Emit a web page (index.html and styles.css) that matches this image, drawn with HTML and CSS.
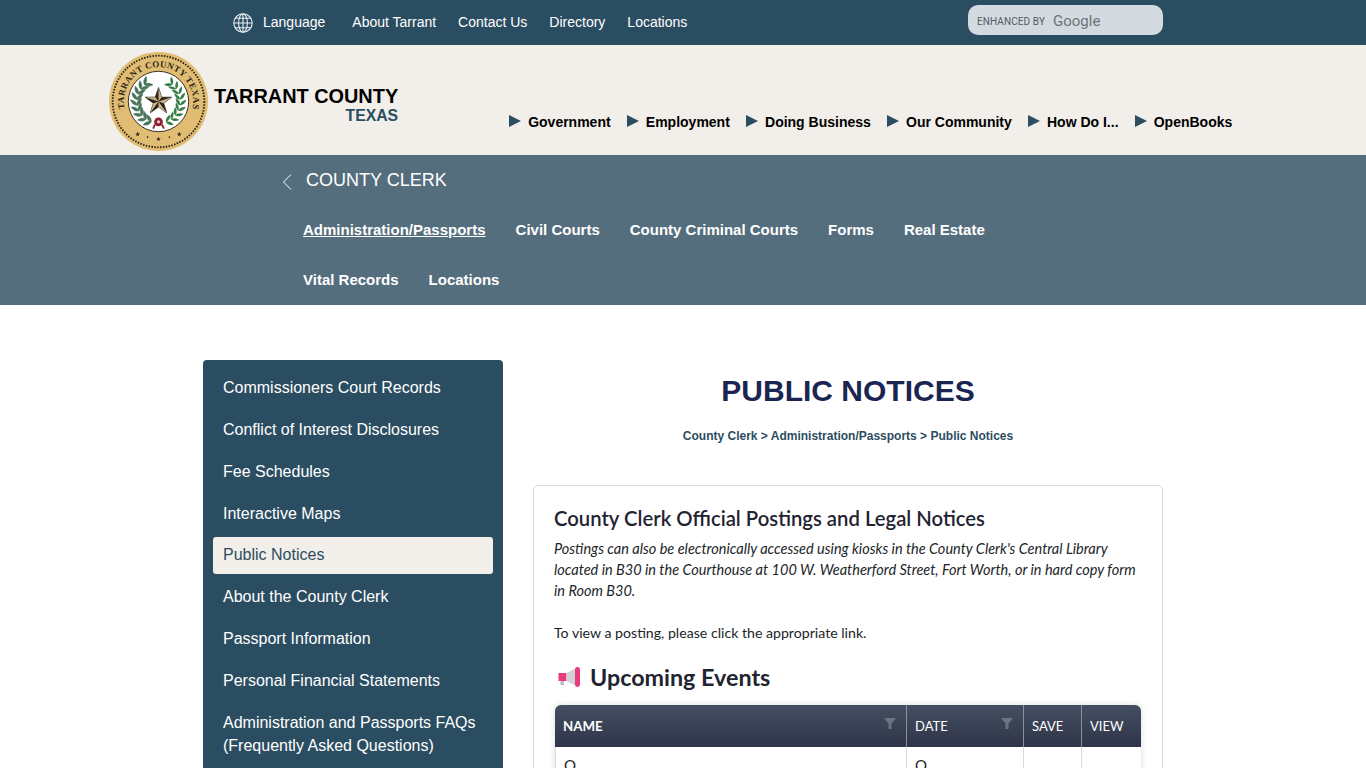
FILE: index.html
```html
<!DOCTYPE html>
<html lang="en">
<head>
<meta charset="utf-8">
<title>Public Notices - Tarrant County</title>
<link rel="stylesheet" href="styles.css">
</head>
<body>
<div class="topbar">
  <nav class="toplinks">
    <a class="lang" href="#">
      <svg class="globe" viewBox="0 0 20 20" width="20" height="20" fill="none" stroke="#e6edf1" stroke-width="1.1">
        <circle cx="10" cy="10" r="9.2"/>
        <ellipse cx="10" cy="10" rx="4.4" ry="9.2"/>
        <path d="M10 .8v18.4M.8 10h18.4M2.2 5.2h15.6M2.2 14.8h15.6"/>
      </svg>
      <span>Language</span>
    </a>
    <a href="#">About Tarrant</a>
    <a href="#">Contact Us</a>
    <a href="#">Directory</a>
    <a href="#">Locations</a>
  </nav>
  <div class="search"><span class="enh">ENHANCED BY</span><span class="goog">Google</span></div>
</div>

<header class="masthead">
  <svg class="seal" viewBox="0 0 100 100" width="99" height="99">
    <defs>
      <path id="arc" d="M16 58.500A35 35 0 1 1 84 58.500"/>
      <path id="leaf" d="M0 0C2-1.900 5.500-1.900 8.500 0C5.500 1.900 2 1.900 0 0Z"/>
      <polygon id="st" points="0,-2.400 .7,-.7 2.400,-.7 1,.3 1.500,2 0,1 -1.500,2 -1,.3 -2.400,-.7 -.7,-.7"/>
      <g id="frond">
        <use href="#leaf" transform="translate(57.500 70.700) rotate(20)"/>
        <use href="#leaf" transform="translate(57.500 70.700) rotate(-60)"/>
        <use href="#leaf" transform="translate(62.600 68) rotate(5)"/>
        <use href="#leaf" transform="translate(62.600 68) rotate(-75)"/>
        <use href="#leaf" transform="translate(66.900 64.100) rotate(-10)"/>
        <use href="#leaf" transform="translate(66.900 64.100) rotate(-90)"/>
        <use href="#leaf" transform="translate(69.900 59.300) rotate(-25)"/>
        <use href="#leaf" transform="translate(69.900 59.300) rotate(-105)"/>
        <use href="#leaf" transform="translate(71.700 53.800) rotate(-40)"/>
        <use href="#leaf" transform="translate(71.700 53.800) rotate(-120)"/>
        <use href="#leaf" transform="translate(71.900 48.100) rotate(-55)"/>
        <use href="#leaf" transform="translate(71.900 48.100) rotate(-135)"/>
        <use href="#leaf" transform="translate(70.700 42.500) rotate(-70)"/>
        <use href="#leaf" transform="translate(70.700 42.500) rotate(-150)"/>
        <use href="#leaf" transform="translate(68 37.400) rotate(-85)"/>
        <use href="#leaf" transform="translate(68 37.400) rotate(-165)"/>
        <use href="#leaf" transform="translate(64.100 33.100) rotate(-100)"/>
        <use href="#leaf" transform="translate(64.100 33.100) rotate(-180)"/>
      </g>
    </defs>
    <circle cx="50" cy="50" r="50" fill="#e0bd72"/>
    <circle cx="50" cy="50" r="46.300" fill="none" stroke="#2a2116" stroke-width="1.900" stroke-dasharray="1.500 1.400"/>
    <text class="sealtext" textLength="124"><textPath href="#arc" startOffset="50%" text-anchor="middle">TARRANT COUNTY TEXAS</textPath></text>
    <circle cx="50" cy="50" r="30.500" fill="#fff" stroke="#3a3022" stroke-width="1"/>
    <use href="#frond" fill="#357f47"/>
    <use href="#frond" transform="translate(100 0) scale(-1 1)" fill="#47735a" stroke="#47735a" stroke-width=".6"/>
    <polygon points="50,36 53.200,45.600 63.300,45.700 55.200,51.700 58.200,61.300 50,55.500 41.800,61.300 44.800,51.700 36.700,45.700 46.800,45.600" fill="#2a2318" stroke="#2a2318" stroke-width=".8"/>
    <path d="M50 50L50 36 53.200 45.600ZM50 50L63.300 45.700 55.200 51.700ZM50 50L58.200 61.300 50 55.500ZM50 50L41.800 61.300 44.800 51.700ZM50 50L36.700 45.700 46.800 45.600Z" fill="#c9b389"/>
    <path d="M46.500 73l-2 4.500M53.500 73l2 4.500" stroke="#8e1f2b" stroke-width="1.800" fill="none"/>
    <circle cx="50" cy="70.500" r="4.400" fill="#8e1f2b"/>
    <circle cx="50" cy="70.500" r="1.600" fill="#e8cfc7"/>
    <g fill="#2a2116">
      <use href="#st" transform="translate(50 88)"/>
      <use href="#st" transform="translate(29 83)"/>
      <use href="#st" transform="translate(71 83)"/>
      <circle cx="39" cy="86" r=".8"/>
      <circle cx="61" cy="86" r=".8"/>
    </g>
  </svg>
  <div class="brand">
    <div class="brand-name">TARRANT COUNTY</div>
    <div class="brand-state">TEXAS</div>
  </div>
  <nav class="mainnav">
    <a href="#">Government</a>
    <a href="#">Employment</a>
    <a href="#">Doing Business</a>
    <a href="#">Our Community</a>
    <a href="#">How Do I...</a>
    <a href="#">OpenBooks</a>
  </nav>
</header>

<section class="subnav">
  <div class="subnav-title">
    <svg class="chev" viewBox="0 0 10 16" width="10" height="16" fill="none" stroke="#fff" stroke-width="1"><path d="M9 .5L1.500 8 9 15.500"/></svg>
    <span>COUNTY CLERK</span>
  </div>
  <nav class="subnav-links">
    <a class="cur" href="#">Administration/Passports</a>
    <a href="#">Civil Courts</a>
    <a href="#">County Criminal Courts</a>
    <a href="#">Forms</a>
    <a href="#">Real Estate</a>
    <a href="#">Vital Records</a>
    <a href="#">Locations</a>
  </nav>
</section>

<main class="page">
  <aside class="side">
    <a href="#">Commissioners Court Records</a>
    <a href="#">Conflict of Interest Disclosures</a>
    <a href="#">Fee Schedules</a>
    <a href="#">Interactive Maps</a>
    <a class="active" href="#">Public Notices</a>
    <a href="#">About the County Clerk</a>
    <a href="#">Passport Information</a>
    <a href="#">Personal Financial Statements</a>
    <a href="#">Administration and Passports FAQs (Frequently Asked Questions)</a>
  </aside>
  <div class="content">
    <h1>PUBLIC NOTICES</h1>
    <div class="crumbs"><a href="#">County Clerk</a> &gt; <a href="#">Administration/Passports</a> &gt; <a href="#">Public Notices</a></div>
    <article class="card">
      <h2>County Clerk Official Postings and Legal Notices</h2>
      <p class="lead">Postings can also be electronically accessed using kiosks in the County Clerk's Central Library located in B30 in the Courthouse at 100 W. Weatherford Street, Fort Worth, or in hard copy form in Room B30.</p>
      <p class="view">To view a posting, please click the appropriate link.</p>
      <h3>
        <svg class="mega" viewBox="0 0 24 24" width="24" height="24">
          <rect x="1.500" y="8" width="8" height="8" fill="#ea3a7a"/>
          <rect x="3.500" y="16" width="3.500" height="4" fill="#b9bac4"/>
          <path d="M9.500 8L18.500 3.500V20.500L9.500 16Z" fill="#cfd0d8"/>
          <rect x="18" y="2" width="5" height="20" rx="2.400" fill="#ea3a7a"/>
        </svg>
        <span>Upcoming Events</span>
      </h3>
      <table class="events">
        <thead>
          <tr>
            <th class="c-name"><span class="bold">NAME</span><svg class="funnel" viewBox="0 0 12 11" width="12" height="11"><path d="M0 0h12L7.500 5.500V11h-3V5.500Z"/></svg></th>
            <th class="c-date">DATE<svg class="funnel" viewBox="0 0 12 11" width="12" height="11"><path d="M0 0h12L7.500 5.500V11h-3V5.500Z"/></svg></th>
            <th class="c-save">SAVE</th>
            <th class="c-view">VIEW</th>
          </tr>
        </thead>
        <tbody>
          <tr><td>Q</td><td>Q</td><td></td><td></td></tr>
        </tbody>
      </table>
    </article>
  </div>
</main>
</body>
</html>
```

FILE: styles.css
```css
* { box-sizing: border-box; }
html, body { margin: 0; height: 768px; overflow: hidden; background: #fff; }
body { font-family: "Liberation Sans", Arial, sans-serif; color: #212529; }
a { color: inherit; text-decoration: none; }

.topbar {
  height: 45px;
  background: #2b4d61;
  display: flex;
  align-items: center;
  padding-left: 233px;
  padding-right: 203px;
  justify-content: space-between;
}
.toplinks { display: flex; align-items: center; gap: 22px; color: #fff; font-size: 14px; padding-bottom: 2px; }
.lang { display: flex; align-items: center; gap: 10px; margin-right: 5px; }
.globe { display: block; margin-top: 2px; }
.search {
  width: 195px;
  height: 30px;
  margin-top: -5px;
  background: #d3dae0;
  border-radius: 10px;
  display: flex;
  align-items: center;
  padding: 1px 0 0 9px;
  gap: 7px;
  color: #5f6368;
}
.enh { font: 10px "Roboto", sans-serif; letter-spacing: .1px; color: #555a60; margin-top: 1px; }
.goog { font: 15px "Roboto", sans-serif; color: #6f7378; margin-left: 1px; }

.masthead {
  height: 110px;
  background: #f2eee9;
  display: flex;
  padding-left: 108.500px;
  align-items: flex-start;
}
.seal { display: block; margin-top: 7px; flex: none; }
.sealtext { font: bold 9px "Liberation Serif", serif; fill: #2a2116; }
.brand { margin-left: 6.500px; margin-top: 39px; text-align: right; font-weight: bold; }
.brand-name { font-size: 19.900px; line-height: 24px; color: #000; }
.brand-state { font-size: 15.800px; line-height: 16px; color: #2b4d61; }
.mainnav {
  display: flex;
  gap: 16.200px;
  margin-left: 111px;
  margin-top: 68px;
  font-size: 14px;
  font-weight: bold;
  line-height: 18px;
  color: #000;
}
.mainnav a { display: flex; align-items: center; gap: 7px; white-space: nowrap; }
.mainnav a::before {
  content: "";
  width: 0;
  height: 0;
  border-left: 12px solid #2b4d61;
  border-top: 6px solid transparent;
  border-bottom: 6px solid transparent;
  margin-top: -2px;
}

.subnav { height: 150px; background: #546e7d; padding-left: 282px; color: #fff; }
.subnav-title { display: flex; align-items: center; gap: 14px; height: 50px; font-size: 18px; padding-top: 1px; }
.chev { display: block; margin-top: 3px; }
.subnav-links {
  display: flex;
  flex-wrap: wrap;
  column-gap: 30px;
  padding-left: 21px;
  width: 760px;
  font-size: 15px;
  font-weight: bold;
}
.subnav-links a { height: 50px; line-height: 50px; }
.subnav-links .cur { text-decoration: underline; }

.page { display: flex; gap: 30px; padding: 55px 0 0 203px; }
.side {
  width: 300px;
  flex: none;
  background: #2b4d61;
  border-radius: 4px 4px 0 0;
  padding: 10.200px 10px 20px;
  display: flex;
  flex-direction: column;
  gap: 4.800px;
  color: #fff;
  font-size: 16px;
  line-height: 23px;
}
.side a { padding: 6px 10px 8px; border-radius: 3px; }
.side .active { background: #f2eee9; color: #2b4d61; }
.content { width: 630px; flex: none; }
h1 {
  margin: 13px 0 0;
  text-align: center;
  font-size: 30px;
  line-height: 36px;
  font-weight: bold;
  color: #1a2651;
}
.crumbs {
  margin-top: 19px;
  text-align: center;
  font-size: 12px;
  line-height: 16px;
  font-weight: bold;
  color: #2b4d61;
}
.card {
  margin-top: 41px;
  border: 1px solid #dcdcdc;
  border-radius: 5px;
  padding: 19px 20px 0;
  font-family: "Lato", sans-serif;
  font-size: 14.150px;
  line-height: 21px;
  color: #212529;
}
h2 { margin: 0 0 7px; font-size: 20.300px; line-height: 26px; font-weight: 600; color: #1f2430; }
.lead { margin: 0; font-style: italic; font-size: 14.500px; }
.view { margin: 21px 0 0; }
h3 {
  margin: 16px 0 0;
  display: flex;
  align-items: center;
  gap: 9px;
  height: 36px;
  padding-left: 3px;
  font-size: 23.300px;
  font-weight: bold;
  color: #1f2430;
}
.mega { display: block; flex: none; }
.events {
  width: 586px;
  margin: 10px 0 0 1px;
  border-collapse: separate;
  border-spacing: 0;
  box-shadow: 0 0 6px rgba(0,0,0,.14);
  border-radius: 6px 6px 0 0;
  table-layout: fixed;
}
.events th {
  position: relative;
  height: 42px;
  background: linear-gradient(#454e61, #2f3549);
  color: #fff;
  font-size: 13px;
  font-weight: normal;
  text-align: left;
  padding: 0 8px;
  border-left: 1px solid #8a8f9c;
}
.events .bold { font-weight: bold; font-size: 13.300px; }
.events th:first-child { border-left: 0; border-radius: 6px 0 0 0; }
.events th:last-child { border-radius: 0 6px 0 0; }
.c-name { width: 351px; }
.c-date { width: 117px; }
.c-save { width: 58px; }
.c-view { width: 60px; }
.funnel { position: absolute; right: 10px; top: 13px; fill: #6d7480; }
.events td {
  height: 60px;
  vertical-align: top;
  padding: 8px;
  border-left: 1px solid #dcdcdc;
  border-bottom: 1px solid #dcdcdc;
  font-size: 15px;
}
```
